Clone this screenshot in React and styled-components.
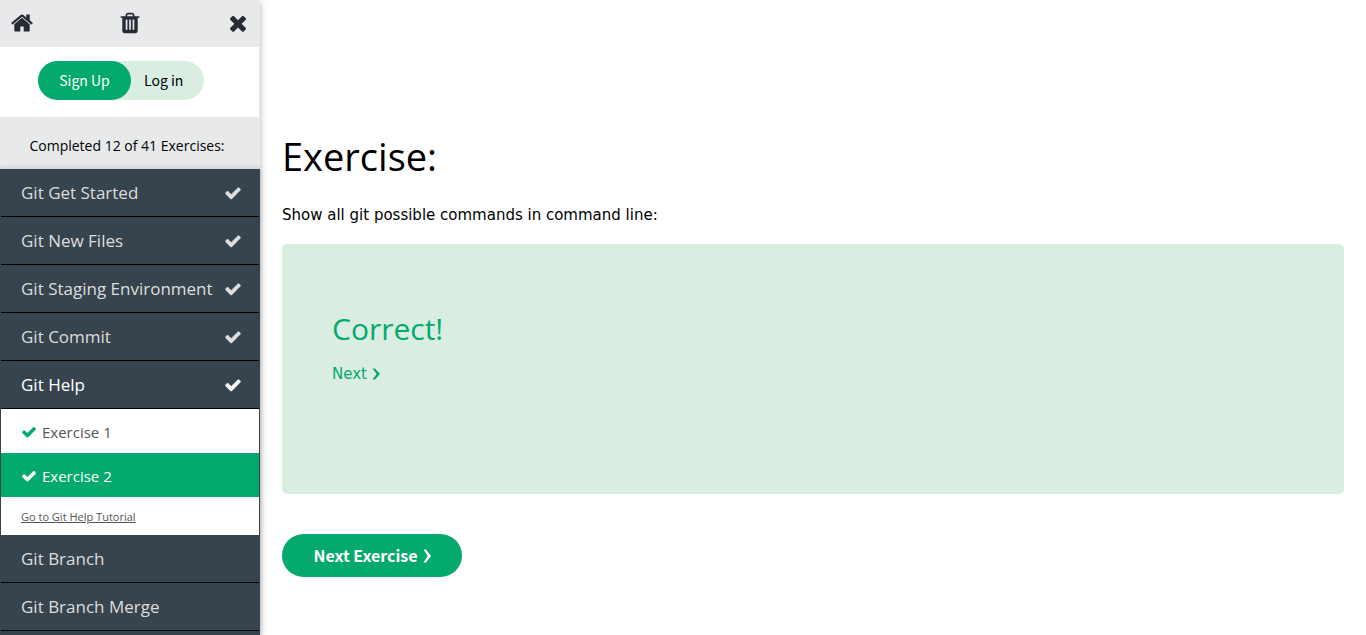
import React from "react";
import styled, { createGlobalStyle } from "styled-components";

const ui = `"Open Sans", "Noto Sans", sans-serif`;
const source = `"Noto Sans CJK SC", "Open Sans", sans-serif`;
const verdana = `"DejaVu Sans", sans-serif`;
const green = "#04aa6d";
const mint = "#d9eee1";
const slate = "#38444d";
const grey = "#e7e9eb";

const GlobalStyle = createGlobalStyle`
  *, *::before, *::after { box-sizing: border-box; }
  body { margin: 0; background: #fff; color: #000; font-family: ${ui}; }
  a { color: inherit; text-decoration: none; }
  h1, h2, p, ul { margin: 0; padding: 0; font-weight: 400; }
  ul { list-style: none; }
  button { border: 0; padding: 0; background: none; color: inherit; font: inherit; cursor: pointer; }
`;

const Page = styled.div`
  display: flex;
  height: 100vh;
  overflow: hidden;
`;

const Sidebar = styled.aside`
  display: flex;
  flex-direction: column;
  flex: 0 0 260px;
  background: ${grey};
  box-shadow: 0 2px 5px rgba(0, 0, 0, 0.2), 0 2px 10px rgba(0, 0, 0, 0.12);
`;

const Toolbar = styled.div`
  display: flex;
  align-items: center;
  justify-content: space-between;
  flex: 0 0 47px;
  padding: 0 10px 2px;
  color: #282a35;
`;

const Icon = styled.svg`
  display: block;
  flex: none;
  width: ${(p) => p.$size}px;
  height: ${(p) => p.$size}px;
  fill: currentColor;
`;

const Account = styled.div`
  flex: 0 0 70px;
  margin-right: 1px;
  padding: 14px 38px;
  background: #fff;
  font: 14px/39px ${source};
`;

const Pill = styled.div`
  display: inline-flex;
  width: 166px;
  height: 39px;
  border-radius: 20px;
  background: ${mint};
`;

const SignUp = styled.a`
  width: 93px;
  border-radius: 20px;
  background: ${green};
  color: #fff;
  text-align: center;
`;

const LogIn = styled.a`
  padding-left: 13px;
`;

const Progress = styled.p`
  flex: 0 0 52px;
  padding: 6px 6px 0 0;
  font-size: 14px;
  line-height: 46px;
  text-align: center;
`;

const Chapters = styled.ul`
  flex: 1 0 auto;
  padding: 0 1px;
  background: ${slate};
  box-shadow: 0 0 6px rgba(0, 0, 0, 0.2);
`;

const Chapter = styled.button`
  display: flex;
  align-items: center;
  justify-content: space-between;
  width: 100%;
  height: 48px;
  padding: 0 17px 0 20px;
  border-bottom: 1px solid #000;
  color: ${(p) => (p.$open ? "#fff" : "#ddd")};
  font-size: 17px;
  white-space: nowrap;
`;

const Exercises = styled.ul`
  background: #fff;
`;

const Exercise = styled.a`
  display: flex;
  align-items: center;
  gap: 5px;
  height: 44px;
  padding: 2px 20px 0;
  background: ${(p) => (p.$current ? green : "#fff")};
  color: ${(p) => (p.$current ? "#fff" : "#555")};
  font-size: 15px;

  svg { color: ${(p) => (p.$current ? "#fff" : green)}; }
`;

const TutorialLink = styled.a`
  display: block;
  height: 38px;
  padding: 0 20px;
  color: #555;
  font-size: 11px;
  line-height: 40px;
  text-decoration: underline;
`;

const Main = styled.main`
  flex: 1;
  min-width: 0;
  padding: 124px 22px 0;
`;

const Title = styled.h1`
  font-size: 38px;
  line-height: 64px;
`;

const Question = styled.p`
  margin: 17px 0 19px;
  font: 15px/20px ${verdana};
`;

const Result = styled.section`
  min-height: 250px;
  padding: 63px 50px;
  border-radius: 5px;
  background: ${mint};
  color: ${green};
`;

const ResultTitle = styled.h2`
  font-size: 30px;
  line-height: 44px;
`;

const NextLink = styled.a`
  display: inline-flex;
  align-items: center;
  gap: 5px;
  margin-top: 13px;
  font: 15px/20px ${verdana};
`;

const NextButton = styled.button`
  display: flex;
  align-items: center;
  justify-content: center;
  gap: 5px;
  width: 180px;
  height: 43px;
  margin-top: 40px;
  border-radius: 22px;
  background: ${green};
  color: #fff;
  font: 700 16px/43px ${source};
`;

const ChevronIcon = styled.svg`
  display: block;
  width: 8px;
  height: ${(p) => p.$height}px;
  fill: currentColor;
`;

const paths = {
  home: "M1472 992v480q0 26-19 45t-45 19h-384v-384h-256v384h-384q-26 0-45-19t-19-45v-480q0-1 .5-3t.5-3l575-474 575 474q1 2 1 6zm223-69l-62 74q-8 9-21 11h-3q-13 0-21-7l-692-577-692 577q-12 8-24 7-13-2-21-11l-62-74q-8-10-7-23.5t11-21.5l719-599q32-26 76-26t76 26l244 204v-195q0-14 9-23t23-9h192q14 0 23 9t9 23v408l219 182q10 8 11 21.5t-7 23.5z",
  trash: "M704 1376v-704q0-14-9-23t-23-9h-64q-14 0-23 9t-9 23v704q0 14 9 23t23 9h64q14 0 23-9t9-23zm256 0v-704q0-14-9-23t-23-9h-64q-14 0-23 9t-9 23v704q0 14 9 23t23 9h64q14 0 23-9t9-23zm256 0v-704q0-14-9-23t-23-9h-64q-14 0-23 9t-9 23v704q0 14 9 23t23 9h64q14 0 23-9t9-23zm-544-992h448l-48-117q-7-9-17-11h-317q-10 2-17 11zm928 32v64q0 14-9 23t-23 9h-96v948q0 83-47 143.5t-113 60.5h-832q-66 0-113-58.5t-47-141.5v-952h-96q-14 0-23-9t-9-23v-64q0-14 9-23t23-9h309l70-167q15-37 54-63t79-26h320q40 0 79 26t54 63l70 167h309q14 0 23 9t9 23z",
  close: "M1490 1322q0 40-28 68l-136 136q-28 28-68 28t-68-28l-294-294-294 294q-28 28-68 28t-68-28l-136-136q-28-28-28-68t28-68l294-294-294-294q-28-28-28-68t28-68l136-136q28-28 68-28t68 28l294 294 294-294q28-28 68-28t68 28l136 136q28 28 28 68t-28 68l-294 294 294 294q28 28 28 68z",
  check: "M1671 566q0 40-28 68l-724 724-136 136q-28 28-68 28t-68-28l-136-136-362-362q-28-28-28-68t28-68l136-136q28-28 68-28t68 28l294 295 656-657q28-28 68-28t68 28l136 136q28 28 28 68z",
};

function Glyph({ name, size }) {
  return (
    <Icon $size={size} viewBox="0 0 1792 1792" aria-hidden="true">
      <path d={paths[name]} />
    </Icon>
  );
}

function Chevron({ height }) {
  return (
    <ChevronIcon $height={height} viewBox="0 0 8 14" preserveAspectRatio="none" aria-hidden="true">
      <path d="M0.5 0.5H3L8 7L3 13.5H0.5L4.6 7Z" />
    </ChevronIcon>
  );
}

const chapters = [
  { title: "Git Get Started", done: true },
  { title: "Git New Files", done: true },
  { title: "Git Staging Environment", done: true },
  { title: "Git Commit", done: true },
  { title: "Git Help", done: true, open: true },
  { title: "Git Branch" },
  { title: "Git Branch Merge" },
];

export default function App() {
  return (
    <Page>
      <GlobalStyle />
      <Sidebar>
        <Toolbar>
          <a href="#home" aria-label="Home"><Glyph name="home" size={24} /></a>
          <button type="button" aria-label="Reset"><Glyph name="trash" size={24} /></button>
          <button type="button" aria-label="Close"><Glyph name="close" size={24} /></button>
        </Toolbar>
        <Account>
          <Pill>
            <SignUp href="#signup">Sign Up</SignUp>
            <LogIn href="#login">Log in</LogIn>
          </Pill>
        </Account>
        <Progress>Completed 12 of 41 Exercises:</Progress>
        <Chapters>
          {chapters.map((c) => (
            <li key={c.title}>
              <Chapter type="button" $open={c.open}>
                {c.title}
                {c.done && <Glyph name="check" size={18} />}
              </Chapter>
              {c.open && (
                <Exercises>
                  <li><Exercise href="#1"><Glyph name="check" size={16} />Exercise 1</Exercise></li>
                  <li><Exercise href="#2" $current><Glyph name="check" size={16} />Exercise 2</Exercise></li>
                  <li><TutorialLink href="#tutorial">Go to Git Help Tutorial</TutorialLink></li>
                </Exercises>
              )}
            </li>
          ))}
        </Chapters>
      </Sidebar>
      <Main>
        <Title>Exercise:</Title>
        <Question>Show all git possible commands in command line:</Question>
        <Result>
          <ResultTitle>Correct!</ResultTitle>
          <NextLink href="#next">Next <Chevron height={12} /></NextLink>
        </Result>
        <NextButton type="button">Next Exercise <Chevron height={14} /></NextButton>
      </Main>
    </Page>
  );
}
